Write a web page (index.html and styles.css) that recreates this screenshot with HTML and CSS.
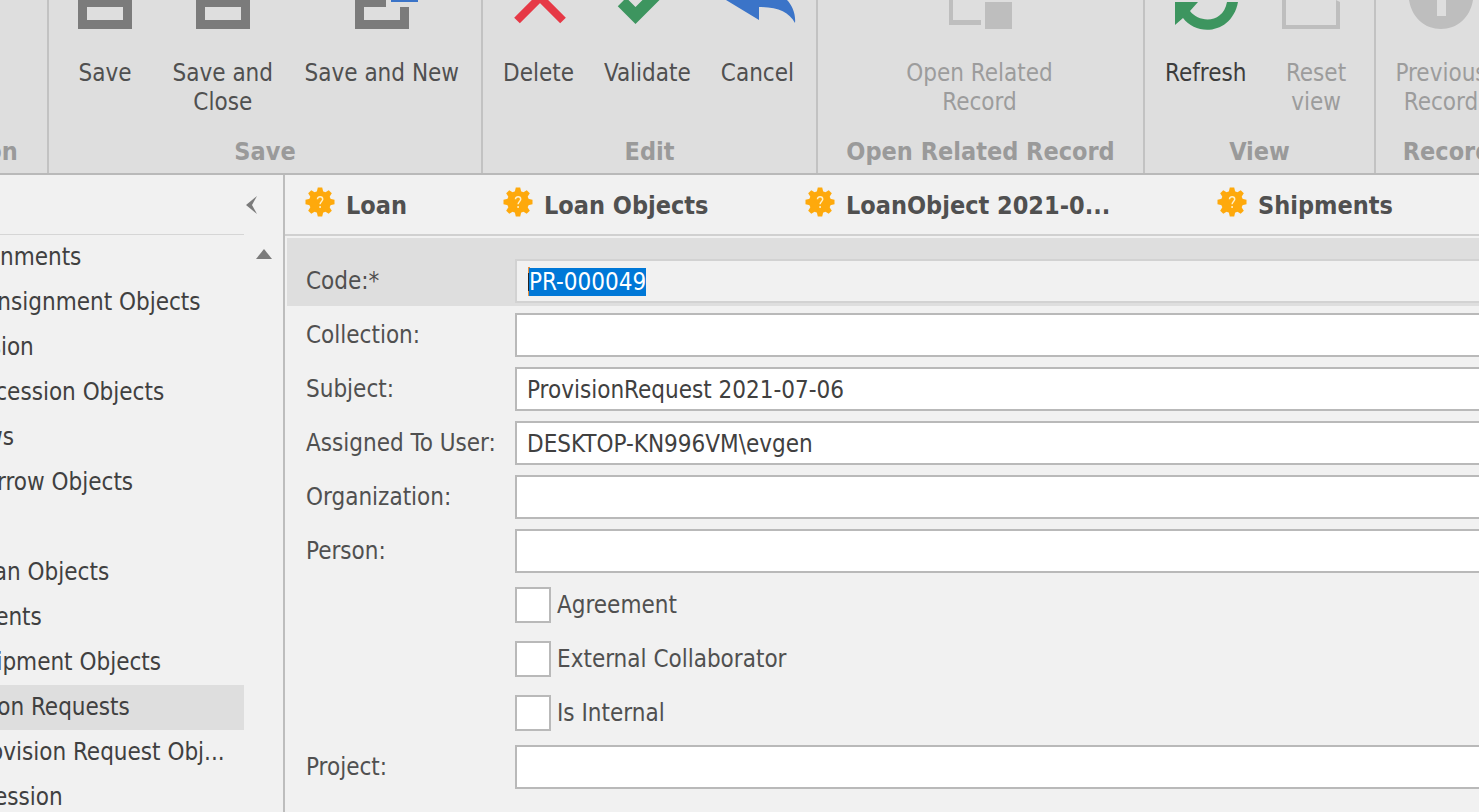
FILE: index.html
```html
<!DOCTYPE html>
<html lang="en">
<head>
<meta charset="utf-8">
<title>Provision Request</title>
<link rel="stylesheet" href="styles.css">
</head>
<body>
<svg class="defs" aria-hidden="true">
  <symbol id="gear" viewBox="0 0 30 30">
    <g fill="#fea90c">
      <circle cx="15" cy="15" r="11"/>
      <g id="teeth"><path d="M11.500 6 12.800 .5h4.400L18.500 6v18l-1.300 5.500h-4.400L11.500 24z"/></g>
      <use href="#teeth" transform="rotate(45 15 15)"/>
      <use href="#teeth" transform="rotate(90 15 15)"/>
      <use href="#teeth" transform="rotate(135 15 15)"/>
    </g>
    <path d="M12.500 12.300c0-3.400 5.200-3.300 5.200 0 0 2.200-2.600 2.200-2.600 5M15.100 19v2" fill="none" stroke="#fff0c8" stroke-width="1.500"/>
  </symbol>
</svg>

<header class="ribbon">
  <section class="group group-first"><div class="tools"></div><h2>Navigation</h2></section>
  <section class="group group-save">
    <div class="tools">
      <button class="tool tool-save"><svg width="64" height="30"><path fill="#7b7b7b" fill-rule="evenodd" d="M5 0h54v29H5zM14 7v13h36V7z"/></svg><span>Save</span></button>
      <button class="tool"><svg width="64" height="30"><path fill="#7b7b7b" fill-rule="evenodd" d="M5 0h54v29H5zM14 7v13h36V7z"/></svg><span>Save and<br>Close</span></button>
      <button class="tool"><svg width="64" height="30"><path fill="#7b7b7b" d="M5 0h31v7H14v13h36V7h9v22H5z"/><path fill="#3b74c8" d="M41 0h27v2H41z"/></svg><span>Save and New</span></button>
    </div>
    <h2>Save</h2>
  </section>
  <section class="group group-edit">
    <div class="tools">
      <button class="tool"><svg width="64" height="30"><path d="M11 20.500 34-2.500 57 20.500" fill="none" stroke="#e63946" stroke-width="8"/></svg><span>Delete</span></button>
      <button class="tool"><svg width="64" height="30"><path d="M7 2 20.500 15.500 50-14" fill="none" stroke="#3d955f" stroke-width="12"/></svg><span>Validate</span></button>
      <button class="tool"><svg width="64" height="30"><path fill="#3b74c8" d="M1 0h61c5 5 9 14 8 23C64 12 53 7 34 7v13z"/></svg><span>Cancel</span></button>
    </div>
    <h2>Edit</h2>
  </section>
  <section class="group group-related">
    <div class="tools tools-center">
      <button class="tool" disabled><svg width="64" height="30"><path fill="#bebebe" d="M1 0h4v20h28v5H1zM37 2h27v27H37z"/></svg><span>Open Related<br>Record</span></button>
    </div>
    <h2>Open Related Record</h2>
  </section>
  <section class="group group-view">
    <div class="tools">
      <button class="tool tool-strong"><svg width="64" height="30"><path fill="#3d955f" d="M1 2h23l-8 9c9 12 33 13 37-9h11C58 34 23 37 9 18l-8 7z"/></svg><span>Refresh</span></button>
      <button class="tool" disabled><svg width="64" height="30"><path fill="#bebebe" d="M-2 0h4v25h50V0l4 2v27H-2z"/></svg><span>Reset<br>view</span></button>
    </div>
    <h2>View</h2>
  </section>
  <section class="group group-record">
    <div class="tools tools-center">
      <button class="tool" disabled><svg width="64" height="30"><path fill="#bebebe" d="M0 0c3 18 16 29 32 29S61 18 64 0H37v16h-9V0z"/></svg><span>Previous<br>Record</span></button>
    </div>
    <h2>Record</h2>
  </section>
</header>

<div class="workspace">
  <nav class="sidebar">
    <div class="sidebar-head">
      <button class="collapse" aria-label="Collapse"><svg width="12" height="18"><path fill="#7b7b7b" d="M11 0 0 9l11 9L6 9z"/></svg></button>
    </div>
    <div class="sidebar-body">
      <ul class="tree">
        <li><a href="#">Consignments</a></li>
        <li class="child"><a href="#">Consignment Objects</a></li>
        <li><a href="#">Accession</a></li>
        <li class="child"><a href="#">Accession Objects</a></li>
        <li><a href="#">Borrows</a></li>
        <li class="child"><a href="#">Borrow Objects</a></li>
        <li></li>
        <li class="child"><a href="#">Loan Objects</a></li>
        <li><a href="#">Shipments</a></li>
        <li class="child"><a href="#">Shipment Objects</a></li>
        <li class="selected"><a href="#">Provision Requests</a></li>
        <li class="child"><a href="#">Provision Request Obj...</a></li>
        <li><a href="#">Deaccession</a></li>
      </ul>
      <button class="scroll-up" aria-label="Scroll up"><svg width="16" height="10"><path fill="#7b7b7b" d="M8 0l8 10H0z"/></svg></button>
    </div>
  </nav>

  <main class="content">
    <div class="tabs">
      <button class="tab"><svg width="30" height="30"><use href="#gear"/></svg>Loan</button>
      <button class="tab tab-medium"><svg width="30" height="30"><use href="#gear"/></svg>Loan Objects</button>
      <button class="tab tab-wide"><svg width="30" height="30"><use href="#gear"/></svg>LoanObject 2021-0...</button>
      <button class="tab"><svg width="30" height="30"><use href="#gear"/></svg>Shipments</button>
    </div>
    <form class="form">
      <div class="row row-code"><label for="code">Code:*</label><input id="code" type="text" value="PR-000049" readonly></div>
      <div class="fields">
        <div class="row"><label for="collection">Collection:</label><input id="collection" type="text"></div>
        <div class="row"><label for="subject">Subject:</label><input id="subject" type="text" value="ProvisionRequest 2021-07-06"></div>
        <div class="row"><label for="assigned">Assigned To User:</label><input id="assigned" type="text" value="DESKTOP-KN996VM\evgen"></div>
        <div class="row"><label for="organization">Organization:</label><input id="organization" type="text"></div>
        <div class="row"><label for="person">Person:</label><input id="person" type="text"></div>
        <div class="row"><label class="check"><input type="checkbox">Agreement</label></div>
        <div class="row"><label class="check"><input type="checkbox">External Collaborator</label></div>
        <div class="row"><label class="check"><input type="checkbox">Is Internal</label></div>
        <div class="row"><label for="project">Project:</label><input id="project" type="text"></div>
      </div>
    </form>
  </main>
</div>
<script src="app.js"></script>
</body>
</html>
```
FILE: styles.css
```css
* { box-sizing: border-box; }

html, body { height: 100%; }

body {
  margin: 0;
  display: flex;
  flex-direction: column;
  overflow: clip;
  background: #f1f1f1;
  color: #505050;
  font: 24px/29px "DejaVu Sans Condensed", "Noto Sans", sans-serif;
}

button, input { font: inherit; color: inherit; }

button {
  padding: 0;
  border: 0;
  background: none;
}

svg { display: block; flex: none; overflow: visible; }

.defs { position: absolute; width: 0; height: 0; }

.ribbon {
  display: flex;
  flex: none;
  overflow: clip;
  background: #dedede;
  border-bottom: 2px solid #b9b9b9;
}

.group {
  display: flex;
  flex: none;
  flex-direction: column;
  border-right: 2px solid #c2c2c2;
  padding-bottom: 7px;
}

.group-first { width: 198px; margin-left: -149px; }
.group-save { width: 434px; }
.group-edit { width: 335px; }
.group-related { width: 327px; }
.group-view { width: 231px; }
.group-record { width: 134px; }

.group h2 {
  margin: 0;
  font-size: 25px;
  line-height: 29px;
  text-align: center;
  white-space: nowrap;
  color: #9a9a9a;
}

.group-record h2 { padding-left: 10px; }

.tools {
  display: flex;
  justify-content: space-between;
  height: 137px;
  padding: 0 22px 0 20px;
}

.group-view .tools { padding: 0 26px 0 20px; }
.tools-center { justify-content: center; }

.tool {
  display: flex;
  flex-direction: column;
  align-items: center;
  justify-content: flex-start;
  gap: 29px;
  white-space: nowrap;
}

.tool-save { min-width: 72px; }
.tool-strong { color: #3c3c3c; }
.tool:disabled { color: #9c9c9c; }

.workspace {
  display: flex;
  flex: 1;
  min-height: 0;
}

.sidebar {
  flex: none;
  width: 285px;
  overflow: clip;
  border-right: 2px solid #bdbdbd;
  color: #404040;
}

.sidebar-head {
  display: flex;
  align-items: center;
  justify-content: flex-end;
  height: 59px;
  padding-right: 25px;
}

.sidebar-body { display: flex; align-items: flex-start; }

.tree {
  flex: none;
  width: 317px;
  margin: 0 0 0 -73px;
  padding: 0;
  list-style: none;
  border-top: 1px solid #d6d6d6;
}

.tree li {
  height: 45px;
  line-height: 45px;
  white-space: nowrap;
}

.tree .child { padding-left: 42px; }
.tree .selected { background: #dedede; }
.tree a { color: inherit; text-decoration: none; }

.scroll-up { margin: 15px 0 0 12px; }

.content {
  flex: 1;
  min-width: 0;
  overflow: clip;
}

.tabs {
  display: flex;
  height: 61px;
  padding: 2px 0 0 20px;
  overflow: clip;
  border-bottom: 2px solid #d0d0d0;
}

.tab {
  display: flex;
  flex: none;
  align-items: center;
  gap: 11px;
  width: 198px;
  font-size: 25px;
  font-weight: bold;
  white-space: nowrap;
}

.tab svg { margin-bottom: 7px; }
.tab-medium { width: 302px; }
.tab-wide { width: 412px; }

.form { margin: 2px -20px 0 2px; }

.row {
  display: grid;
  grid-template-columns: 209px 1fr;
  align-items: center;
  height: 44px;
}

.row label { padding-top: 1px; }

.row-code {
  height: 68px;
  padding: 21px 0 3px 19px;
  background: #dedede;
}

.fields {
  display: grid;
  gap: 10px;
  padding: 7px 0 20px 19px;
}

input[type="text"] {
  width: 100%;
  height: 44px;
  padding: 1px 10px 0;
  border: 2px solid #b9b9b9;
  border-radius: 0;
  outline: 0;
  background: #fff;
  color: #404040;
}

.row-code input[type="text"] {
  padding-left: 12px;
  border-color: #d2d2d2;
  background: linear-gradient(#e8903c 6px, #2a2320 6px 24px, #e8903c 24px) 11px 6px / 2px 29px no-repeat #f1f1f1;
}

input::selection { background: #0078d7; color: #fff; }

.row .check {
  display: flex;
  grid-column: 2;
  align-items: center;
  gap: 6px;
  padding-top: 0;
}

.check input {
  appearance: none;
  width: 36px;
  height: 36px;
  margin: 0;
  border: 2px solid #b9b9b9;
  background: #fff;
}
```
FILE: app.js
```js
const code = document.getElementById("code");
code.focus();
code.select();
```
